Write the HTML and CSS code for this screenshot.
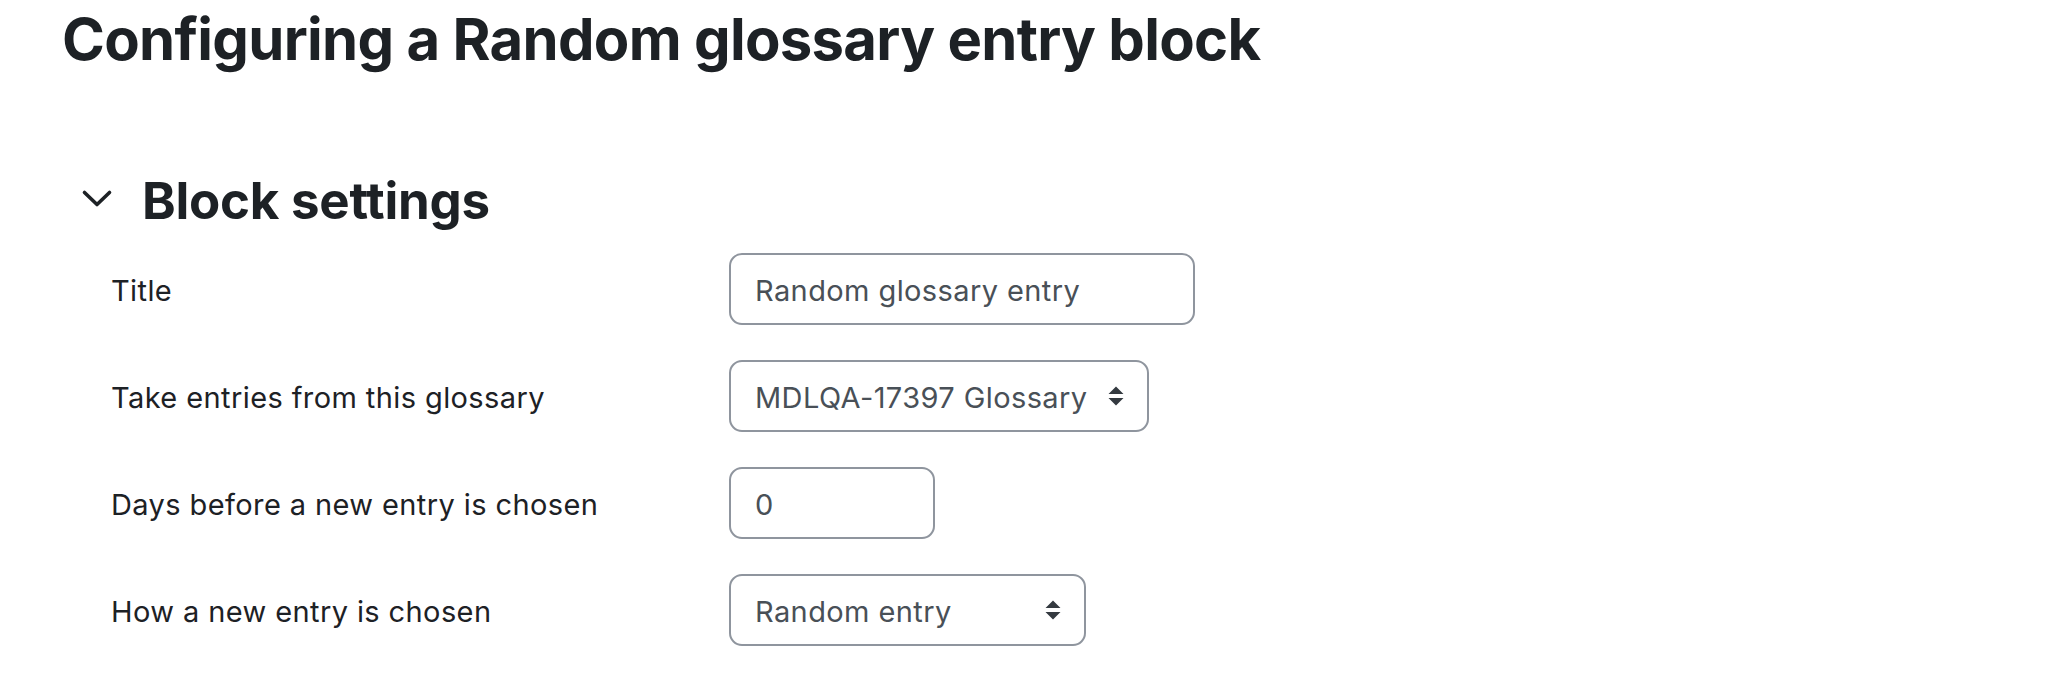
FILE: index.html
```html
<!DOCTYPE html>
<html lang="en">
<head>
<meta charset="utf-8">
<title>Configuring a Random glossary entry block</title>
<link rel="stylesheet" href="styles.css">
</head>
<body>
<main class="page">
  <h1 class="page-title">Configuring a Random glossary entry block</h1>
  <section class="section">
    <div class="section-head">
      <svg class="chevron" width="32" height="20" viewBox="0 0 32 20" aria-hidden="true">
        <path d="M3.5 3.5 L16 15.5 L28.5 3.5" fill="none" stroke="#1d2125" stroke-width="3.6" stroke-linecap="round" stroke-linejoin="round"/>
      </svg>
      <h2 class="section-title">Block settings</h2>
    </div>
    <div class="row">
      <label class="lbl" for="f-title">Title</label>
      <input class="control w-title" id="f-title" type="text" value="Random glossary entry">
    </div>
    <div class="row">
      <label class="lbl" for="f-glossary">Take entries from this glossary</label>
      <div class="select-wrap">
        <select class="control select w-glossary" id="f-glossary"><option>MDLQA-17397 Glossary</option></select>
        <svg class="arrows" width="16" height="20" viewBox="0 0 16 20" aria-hidden="true"><path d="M0.5 8 L8 0.5 L15.5 8 Z M0.5 12 L8 19.5 L15.5 12 Z" fill="#343a40"/></svg>
      </div>
    </div>
    <div class="row">
      <label class="lbl" for="f-days">Days before a new entry is chosen</label>
      <input class="control w-days" id="f-days" type="text" value="0">
    </div>
    <div class="row">
      <label class="lbl" for="f-how">How a new entry is chosen</label>
      <div class="select-wrap">
        <select class="control select w-how" id="f-how"><option>Random entry</option></select>
        <svg class="arrows" width="16" height="20" viewBox="0 0 16 20" aria-hidden="true"><path d="M0.5 8 L8 0.5 L15.5 8 Z M0.5 12 L8 19.5 L15.5 12 Z" fill="#343a40"/></svg>
      </div>
    </div>
  </section>
</main>
</body>
</html>
```

FILE: styles.css
```css
* { box-sizing: border-box; }
html, body { margin: 0; padding: 0; background: #ffffff; }
body {
  font-family: Inter, "Noto Sans", "Liberation Sans", sans-serif;
  color: #1d2125;
}
.page {
  padding: 4px 0 0 62px;
}
.page-title {
  margin: 0;
  font-size: 58px;
  font-weight: 700;
  line-height: 71px;
  letter-spacing: -0.7px;
}
.section {
  margin-top: 95px;
}
.section-head {
  display: flex;
  align-items: center;
  padding-left: 19px;
  gap: 29px;
  height: 61px;
}
.chevron { display: block; flex: none; margin-top: -3px; }
.section-title {
  margin: 0;
  font-size: 51px;
  font-weight: 700;
  line-height: 61px;
  letter-spacing: -0.25px;
}
.row {
  display: flex;
  align-items: center;
  height: 72px;
  margin-top: 22px;
}
.row + .row { margin-top: 35px; }
.lbl {
  width: 667px;
  padding-left: 49px;
  padding-top: 3px;
  font-size: 29px;
  line-height: 1.5;
  letter-spacing: 0.4px;
  flex: none;
}
.control {
  display: block;
  height: 72px;
  border: 2px solid #8f959e;
  border-radius: 13px;
  background: #ffffff;
  color: #495057;
  font-family: inherit;
  font-size: 29px;
  letter-spacing: 0.4px;
  padding: 2px 24px 0;
  margin: 0;
  outline: none;
}
.select {
  appearance: none;
  -webkit-appearance: none;
  padding-right: 40px;
}
.select-wrap { position: relative; }
.arrows {
  position: absolute;
  right: 25px;
  top: 50%;
  transform: translateY(-50%);
  pointer-events: none;
}
.w-title { width: 466px; }
.w-glossary { width: 420px; }
.w-days { width: 206px; }
.w-how { width: 357px; }
```
